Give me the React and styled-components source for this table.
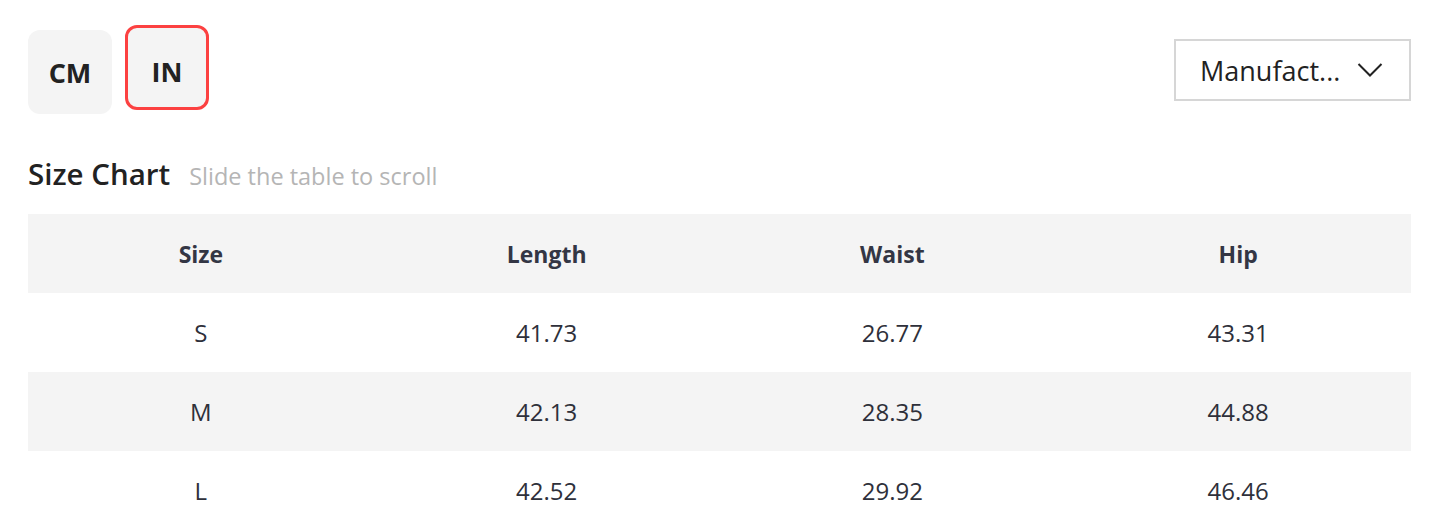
import styled, { createGlobalStyle } from 'styled-components'

const GlobalStyle = createGlobalStyle`
  body {
    margin: 0;
    background: #ffffff;
    font-family: 'Open Sans', 'Liberation Sans', sans-serif;
  }
`

const Page = styled.div`
  padding: 25px 34px 0 28px;
`

const TopBar = styled.div`
  display: flex;
  justify-content: space-between;
  align-items: flex-start;
`

const Units = styled.div`
  display: flex;
  align-items: flex-start;
  gap: 13px;
`

const UnitButton = styled.button`
  box-sizing: border-box;
  width: 84px;
  height: ${(p) => (p.$active ? '85px' : '84px')};
  margin-top: ${(p) => (p.$active ? '0' : '5px')};
  padding: ${(p) => (p.$active ? '8px 0 0' : '0')};
  border-radius: 12px;
  border: ${(p) => (p.$active ? '3px solid #fc4141' : '0')};
  background: #f4f4f4;
  color: #222222;
  font-family: inherit;
  font-size: 27px;
  font-weight: 700;
  display: flex;
  align-items: center;
  justify-content: center;
  cursor: pointer;
`

const Select = styled.div`
  box-sizing: border-box;
  margin-top: 14px;
  width: 237px;
  height: 62px;
  border: 2px solid #d6d6d6;
  display: flex;
  align-items: center;
  padding: 0 26px 0 24px;
  gap: 12px;
  font-size: 27px;
  color: #222222;

  span {
    flex: 1;
    white-space: nowrap;
  }
`

const TitleRow = styled.div`
  display: flex;
  align-items: baseline;
  gap: 19px;
  margin-top: 40px;
  line-height: 40px;
`

const Title = styled.h2`
  margin: 0;
  font-size: 29.5px;
  font-weight: 600;
  color: #222222;
`

const Hint = styled.span`
  font-size: 23.5px;
  color: #b5b5b5;
`

const Table = styled.div`
  margin-top: 18px;
  display: grid;
  grid-template-columns: repeat(4, 1fr);
`

const Row = styled.div`
  display: contents;

  & > div {
    background: ${(p) => (p.$shaded ? '#f4f4f4' : '#ffffff')};
  }
`

const Cell = styled.div`
  height: 79px;
  display: flex;
  align-items: center;
  justify-content: center;
  font-size: ${(p) => (p.$head ? '23px' : '24px')};
  font-weight: ${(p) => (p.$head ? 700 : 400)};
  color: ${(p) => (p.$head ? '#333644' : '#2e303a')};
`

const Chevron = () => (
  <svg width="26" height="16" viewBox="0 0 26 16" fill="none">
    <path d="M1.5 2 L13 13.5 L24.5 2" stroke="#222" strokeWidth="2" />
  </svg>
)

const heads = ['Size', 'Length', 'Waist', 'Hip']
const rows = [
  ['S', '41.73', '26.77', '43.31'],
  ['M', '42.13', '28.35', '44.88'],
  ['L', '42.52', '29.92', '46.46'],
]

export default function App() {
  return (
    <Page>
      <GlobalStyle />
      <TopBar>
        <Units>
          <UnitButton>CM</UnitButton>
          <UnitButton $active>IN</UnitButton>
        </Units>
        <Select>
          <span>Manufact...</span>
          <Chevron />
        </Select>
      </TopBar>
      <TitleRow>
        <Title>Size Chart</Title>
        <Hint>Slide the table to scroll</Hint>
      </TitleRow>
      <Table>
        <Row $shaded>
          {heads.map((h) => (
            <Cell $head key={h}>
              {h}
            </Cell>
          ))}
        </Row>
        {rows.map((r, i) => (
          <Row key={r[0]} $shaded={i % 2 === 1}>
            {r.map((v, j) => (
              <Cell key={j}>{v}</Cell>
            ))}
          </Row>
        ))}
      </Table>
    </Page>
  )
}
